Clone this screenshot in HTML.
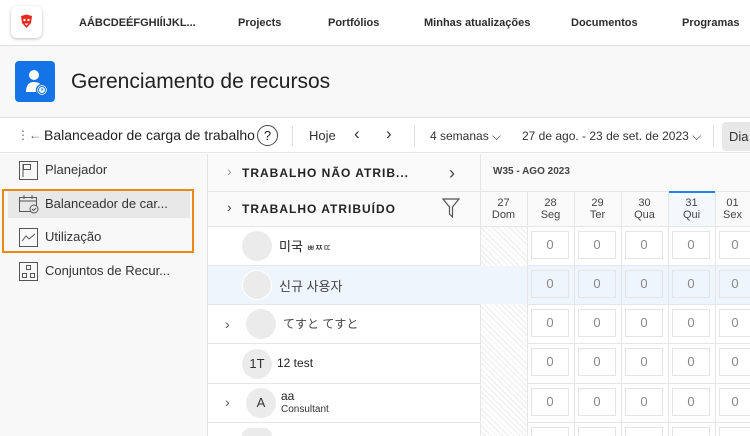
<!DOCTYPE html>
<html style="overflow:hidden"><head><meta charset="utf-8"><style>
*{margin:0;padding:0;box-sizing:border-box}
html,body{width:750px;height:436px;overflow:hidden}
body{background:#fff;font-family:"Liberation Sans","Noto Sans CJK KR",sans-serif;color:#222}
#w{position:relative;width:750px;height:436px;overflow:hidden}
.a{position:absolute;white-space:nowrap}
.nav{font-size:11px;font-weight:bold;color:#2c2c2c;top:17px}
.cell{position:absolute;width:38px;height:28px;border:1px solid #e4e4e4;background:#fff;color:#888;font-size:13px;text-align:center;line-height:26px}
.hd{font-size:11px;color:#444;text-align:center;line-height:12px;width:47px}
.av{position:absolute;border-radius:50%;background:#ebebeb;width:30px;height:30px;font-size:13px;text-align:center;line-height:30px;color:#333}
.chev{font-size:14px;color:#555}
</style></head><body><div id="w">
<div class="a" style="left:0;top:0;width:750px;height:46px;border-bottom:1px solid #ddd;background:#fff"></div>
<div class="a" style="left:11px;top:6px;width:31px;height:32px;border-radius:6px;background:#fff;box-shadow:0 1px 3px rgba(0,0,0,.25)"></div>
<svg class="a" style="left:19px;top:14px" width="15" height="15" viewBox="0 0 15 15"><path d="M2 2 L7.5 0.5 L13 2 L12 9 L7.5 14 L3 9Z" fill="#e8281f"/><circle cx="5.5" cy="6" r="1.2" fill="#fff"/><circle cx="9.5" cy="6" r="1.2" fill="#fff"/><path d="M5.5 9.5 L9.5 9.5 L7.5 11.5Z" fill="#fff"/></svg>
<div class="a nav" style="left:79px">AÁBCDEÉFGHIÍIJKL...</div>
<div class="a nav" style="left:238px">Projects</div>
<div class="a nav" style="left:328px">Portfólios</div>
<div class="a nav" style="left:424px">Minhas atualizações</div>
<div class="a nav" style="left:571px">Documentos</div>
<div class="a nav" style="left:682px">Programas</div>
<div class="a" style="left:0;top:46px;width:750px;height:72px;background:#f8f8f8;border-bottom:1px solid #e0e0e0"></div>
<div class="a" style="left:15px;top:61px;width:40px;height:41px;border-radius:4px;background:#1473e6"></div>
<svg class="a" style="left:15px;top:61px" width="40" height="41" viewBox="0 0 40 41"><circle cx="19" cy="14" r="5" fill="#fff"/><path d="M11 31 Q11 21 19 21 Q24 21 26 24 L26 31Z" fill="#fff"/><circle cx="27" cy="29" r="5.5" fill="#fff" stroke="#1473e6" stroke-width="1.3"/><circle cx="27" cy="29" r="3.5" fill="none" stroke="#1473e6" stroke-width="1"/><path d="M27 27v2h1.5" stroke="#1473e6" fill="none"/></svg>
<div class="a" style="left:71px;top:70px;font-size:21px;color:#222">Gerenciamento de recursos</div>
<div class="a" style="left:0;top:119px;width:750px;height:34px;background:#fff;border-bottom:1px solid #e6e6e6"></div>
<div class="a" style="left:17px;top:128px;font-size:12px;color:#666">⋮←</div>
<div class="a" style="left:44px;top:127px;font-size:14px;color:#222">Balanceador de carga de trabalho</div>
<div class="a" style="left:257px;top:125px;width:21px;height:21px;border:1.3px solid #444;border-radius:50%;text-align:center;font-size:13px;line-height:19px">?</div>
<div class="a" style="left:292px;top:126px;width:1px;height:20px;background:#ddd"></div>
<div class="a" style="left:309px;top:128px;font-size:13px;color:#333">Hoje</div>
<div class="a" style="left:354px;top:124px;font-size:17px;color:#333">‹</div>
<div class="a" style="left:386px;top:124px;font-size:17px;color:#333">›</div>
<div class="a" style="left:414px;top:126px;width:1px;height:20px;background:#ddd"></div>
<div class="a" style="left:430px;top:129px;font-size:12px;color:#333">4 semanas ⌵</div>
<div class="a" style="left:522px;top:129px;font-size:12px;color:#333">27 de ago. - 23 de set. de 2023 ⌵</div>
<div class="a" style="left:713px;top:126px;width:1px;height:20px;background:#ddd"></div>
<div class="a" style="left:722px;top:122px;width:28px;height:29px;background:#e8e8e8;border-radius:4px 0 0 4px;font-size:13px;line-height:29px;padding-left:7px;color:#333;overflow:hidden">Dia</div>
<div class="a" style="left:0;top:154px;width:208px;height:282px;background:#f8f8f8;border-right:1px solid #e4e4e4"></div>
<div class="a" style="left:8px;top:190px;width:182px;height:28px;background:#e8e8e8"></div>
<div class="a" style="left:2px;top:189px;width:192px;height:64px;border:2px solid #e98a14"></div>
<svg class="a" style="left:19px;top:161px" width="19" height="19"><rect x="0.5" y="0.5" width="18" height="18" fill="none" stroke="#555"/><rect x="4.5" y="3.5" width="7" height="5" fill="none" stroke="#555"/><line x1="4" y1="3" x2="4" y2="16" stroke="#555"/></svg>
<div class="a" style="left:45px;top:162px;font-size:13px;color:#333">Planejador</div>
<svg class="a" style="left:19px;top:195px" width="20" height="19"><rect x="0.5" y="2.5" width="17" height="14" fill="none" stroke="#555"/><line x1="0" y1="6" x2="18" y2="6" stroke="#555"/><line x1="5" y1="0" x2="5" y2="4" stroke="#555"/><line x1="13" y1="0" x2="13" y2="4" stroke="#555"/><circle cx="15" cy="14" r="4" fill="#e8e8e8" stroke="#555"/><path d="M13 14l1.5 1.5 2.5-2.5" stroke="#555" fill="none"/></svg>
<div class="a" style="left:45px;top:196px;font-size:13px;color:#333">Balanceador de car...</div>
<svg class="a" style="left:19px;top:228px" width="19" height="19"><rect x="0.5" y="0.5" width="18" height="18" fill="none" stroke="#555"/><path d="M3 13 L7 8 L10 11 L16 6" stroke="#555" fill="none"/></svg>
<div class="a" style="left:45px;top:229px;font-size:13px;color:#333">Utilização</div>
<svg class="a" style="left:19px;top:262px" width="19" height="19"><rect x="0.5" y="0.5" width="18" height="18" fill="none" stroke="#555"/><rect x="7.5" y="3.5" width="4" height="4" fill="none" stroke="#555"/><rect x="3.5" y="11.5" width="4" height="4" fill="none" stroke="#555"/><rect x="11.5" y="11.5" width="4" height="4" fill="none" stroke="#555"/></svg>
<div class="a" style="left:45px;top:263px;font-size:13px;color:#333">Conjuntos de Recur...</div>
<div class="a" style="left:208px;top:154px;width:542px;height:72px;background:#fafafa"></div>
<div class="a" style="left:208px;top:191px;width:542px;height:1px;background:#e6e6e6"></div>
<div class="a" style="left:208px;top:226px;width:542px;height:1px;background:#e6e6e6"></div>
<div class="a chev" style="left:227px;top:163px;color:#999">›</div>
<div class="a" style="left:242px;top:166px;font-size:12px;font-weight:bold;letter-spacing:1px;color:#222">TRABALHO NÃO ATRIB...</div>
<div class="a" style="left:449px;top:163px;font-size:18px;color:#444">›</div>
<div class="a chev" style="left:227px;top:199px;color:#444">›</div>
<div class="a" style="left:242px;top:202px;font-size:12px;font-weight:bold;letter-spacing:1px;color:#222">TRABALHO ATRIBUÍDO</div>
<svg class="a" style="left:442px;top:198px" width="18" height="20"><path d="M1 1 H17 L10.5 9 V19 L7.5 16 V9Z" fill="none" stroke="#555" stroke-width="1.2"/></svg>
<div class="a" style="left:480px;top:154px;width:1px;height:282px;background:#e6e6e6"></div>
<div class="a" style="left:493px;top:166px;font-size:10px;font-weight:bold;color:#444">W35 - AGO 2023</div>
<div class="a" style="left:208px;top:265px;width:542px;height:39px;background:#eef5fc"></div>
<div class="a" style="left:208px;top:265px;width:542px;height:1px;background:#e2e8ef"></div>
<div class="a" style="left:208px;top:304px;width:542px;height:1px;background:#e6e6e6"></div>
<div class="a" style="left:208px;top:343px;width:542px;height:1px;background:#e6e6e6"></div>
<div class="a" style="left:208px;top:383px;width:542px;height:1px;background:#e6e6e6"></div>
<div class="a" style="left:208px;top:422px;width:542px;height:1px;background:#e6e6e6"></div>
<div class="av" style="left:242px;top:231px"></div>
<div class="a" style="left:279px;top:236px;font-size:13px">미국 <span style="font-size:9px">ㅃㅉㄸ</span></div>
<div class="av" style="left:242px;top:270px;border:1px solid #fff"></div>
<div class="a" style="left:279px;top:276px;font-size:13px;color:#444">신규 사용자</div>
<div class="a chev" style="left:225px;top:316px">›</div>
<div class="av" style="left:246px;top:309px"></div>
<div class="a" style="left:283px;top:315px;font-size:12px;color:#444">てすと てすと</div>
<div class="av" style="left:242px;top:349px">1T</div>
<div class="a" style="left:277px;top:356px;font-size:12px">12 test</div>
<div class="a chev" style="left:225px;top:394px">›</div>
<div class="av" style="left:246px;top:388px">A</div>
<div class="a" style="left:281px;top:389px;font-size:12px">aa</div>
<div class="a" style="left:281px;top:404px;font-size:10px;color:#333">Consultant</div>
<div class="a" style="left:242px;top:428px;width:30px;height:8px;background:#ebebeb;border-radius:15px 15px 0 0"></div>
<div class="a" style="left:481px;top:227px;width:46px;height:209px;background:repeating-linear-gradient(45deg,#fff 0 3px,#ececec 3px 4px)"></div>
<div class="a" style="left:481px;top:266px;width:46px;height:38px;background:#eef5fc"></div>
<div class="a" style="left:669px;top:192px;width:46px;height:34px;background:#f3f8fd"></div>
<div class="a" style="left:669px;top:191px;width:46px;height:2px;background:#2680eb"></div>
<div id="g"></div>
</div>
<script>
var days=[["27","Dom"],["28","Seg"],["29","Ter"],["30","Qua"],["31","Qui"],["01","Sex"]];
var h="";
for(var i=0;i<6;i++){var x=480+i*47;
h+='<div class="a hd" style="left:'+x+'px;top:197px;'+(i==5?'width:35px;overflow:hidden':'')+'">'+days[i][0]+'<br>'+days[i][1]+'</div>';
if(i<5)h+='<div class="a" style="left:'+(x+47)+'px;top:192px;width:1px;height:244px;background:#e6e6e6"></div>';
if(i>0){var tops=[231,270,309,348,388,427];for(var j=0;j<6;j++){var bg=j==1?'#eef5fc':'#fff';var hh=j==5?'height:9px;border-bottom:0;':'';var ww=i==5?'width:31px;border-right:0;':'';h+='<div class="cell" style="left:'+(x+4)+'px;top:'+(tops[j])+'px;background:'+bg+';'+hh+ww+'">'+(j<5?'0':'')+'</div>';}}}
document.getElementById('g').innerHTML=h;
</script>
</body></html>
